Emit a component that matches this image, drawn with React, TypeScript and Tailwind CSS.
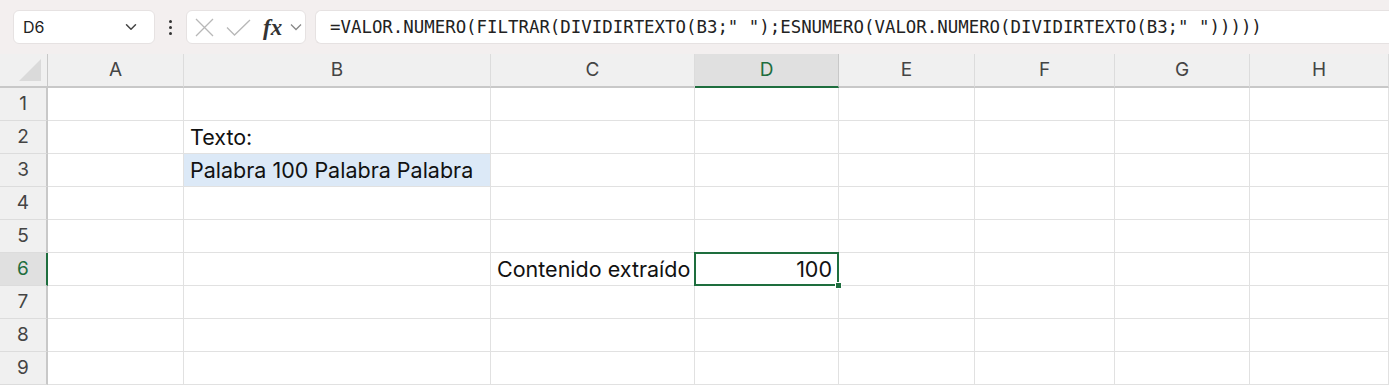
import { ChevronDown } from "lucide-react";

const cols = ["A", "B", "C", "D", "E", "F", "G", "H"];
const rows = [1, 2, 3, 4, 5, 6, 7, 8, 9];

const formula = `=VALOR.NUMERO(FILTRAR(DIVIDIRTEXTO(B3;" ");ESNUMERO(VALOR.NUMERO(DIVIDIRTEXTO(B3;" ")))))`;

const cellFont = { fontFamily: "Inter, 'Noto Sans', sans-serif" };

const Cell = ({ row, col }: { row: number; col: string }) => {
  const key = `${col}${row}`;
  const base =
    "h-[33px] border-b border-r border-[#e1e1e1] flex items-center px-[6px] text-[21.5px] text-[#111] whitespace-nowrap";

  if (key === "B2") return <div className={base}>Texto:</div>;
  if (key === "B3")
    return <div className={`${base} bg-[#dce9f7]`}>Palabra 100 Palabra Palabra</div>;
  if (key === "C6") return <div className={base}>Contenido extraído</div>;
  if (key === "D6")
    return (
      <div className={`${base} relative justify-end`}>
        100
        <div className="absolute -left-px -top-px -right-px -bottom-px border-2 border-[#1e6e3e] pointer-events-none" />
        <div className="absolute -right-[4px] -bottom-[4px] w-[7px] h-[7px] bg-[#1e6e3e] border border-white" />
      </div>
    );
  return <div className={base} />;
};

export default function App() {
  return (
    <div className="w-[1389px] h-[386px] overflow-hidden bg-white" style={cellFont}>
      {/* formula bar */}
      <div className="h-[54px] bg-[#f3efef] flex items-center pl-[13px]">
        <div className="w-[142px] h-[34px] bg-white rounded-[6px] border border-[#e6e2e2] flex items-center justify-between pl-[9px] pr-[14px] text-[16px] text-[#222]">
          <span>D6</span>
          <ChevronDown size={18} strokeWidth={2} className="text-[#444]" />
        </div>
        <div className="w-[31px] flex flex-col items-center gap-[3px]">
          <span className="w-[3px] h-[3px] rounded-full bg-[#333]" />
          <span className="w-[3px] h-[3px] rounded-full bg-[#333]" />
          <span className="w-[3px] h-[3px] rounded-full bg-[#333]" />
        </div>
        <div className="w-[120px] h-[34px] bg-white rounded-[6px] border border-[#e6e2e2] flex items-center pl-[8px]">
          <svg width="19" height="19" viewBox="0 0 19 19" className="text-[#b8b8b8]">
            <path d="M1 1 18 18M18 1 1 18" stroke="currentColor" strokeWidth="1.3" fill="none" />
          </svg>
          <svg width="25" height="17" viewBox="0 0 25 17" className="ml-[12px] text-[#b8b8b8]">
            <path d="M1 8.5 8.5 16 24 1" stroke="currentColor" strokeWidth="1.3" fill="none" />
          </svg>
          <span
            className="ml-[12px] text-[23px] italic font-bold text-[#333] leading-none"
            style={{ fontFamily: "'Liberation Serif', serif" }}
          >
            fx
          </span>
          <svg width="12" height="8" viewBox="0 0 12 8" className="ml-[8px] text-[#888]">
            <path d="M1 1.5 6 6.5 11 1.5" stroke="currentColor" strokeWidth="1.3" fill="none" />
          </svg>
        </div>
        <div
          className="ml-[9px] flex-1 h-[34px] bg-white rounded-l-[6px] border border-r-0 border-[#e6e2e2] flex items-center pl-[14px] text-[17.4px] text-[#222] whitespace-nowrap"
          style={{ fontFamily: "'DejaVu Sans Mono', monospace" }}
        >
          {formula}
        </div>
      </div>

      {/* grid */}
      <div className="grid grid-cols-[48px_136px_307px_204px_144px_136px_140px_135px_139px]">
        {/* header row */}
        <div className="h-[34px] bg-[#f0f0f0] border-b-2 border-r border-[#c8c8c8] relative">
          <div className="absolute right-[6px] bottom-[5px] w-0 h-0 border-l-[22px] border-l-transparent border-b-[22px] border-b-[#dadada]" />
        </div>
        {cols.map((c) => (
          <div
            key={c}
            className={
              c === "D"
                ? "h-[34px] bg-[#e0e0e0] border-b-2 border-b-[#1e6e3e] border-r border-r-[#c8c8c8] flex items-center justify-center text-[19px] text-[#1e6e3e]"
                : "h-[34px] bg-[#f0f0f0] border-b-2 border-b-[#c8c8c8] border-r border-r-[#dcdcdc] flex items-center justify-center text-[19px] text-[#444]"
            }
          >
            {c}
          </div>
        ))}

        {rows.map((r) => (
          <div key={r} className="contents">
            <div
              className={
                r === 6
                  ? "h-[33px] bg-[#e0e0e0] border-b border-b-[#dcdcdc] border-r-2 border-r-[#1e6e3e] flex items-center justify-center text-[19px] text-[#1e6e3e]"
                  : "h-[33px] bg-[#f0f0f0] border-b border-b-[#dcdcdc] border-r-2 border-r-[#c8c8c8] flex items-center justify-center text-[19px] text-[#444]"
              }
            >
              {r}
            </div>
            {cols.map((c) => (
              <Cell key={c} row={r} col={c} />
            ))}
          </div>
        ))}
      </div>
    </div>
  );
}
